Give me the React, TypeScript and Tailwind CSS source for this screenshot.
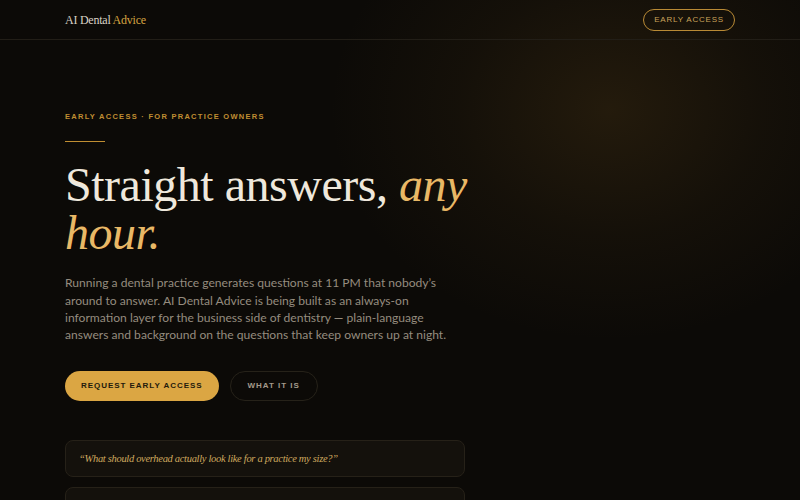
import React from "react";

const serif = "font-['Liberation_Serif','DejaVu_Serif',serif]";
const sans = "font-['Liberation_Sans','Arial',sans-serif]";
const body = "font-['Lato','Noto_Sans',sans-serif]";

const questions = [
  "\u201cWhat should overhead actually look like for a practice my size?\u201d",
  "\u201cIs it time to bring on an associate, or should I wait another year?\u201d",
];

export default function App() {
  return (
    <div className="relative min-h-[500px] w-full overflow-hidden bg-[#0c0a07] text-[#efe8dc]">
      <div className="pointer-events-none absolute left-[330px] top-[-120px] h-[460px] w-[560px] rounded-full bg-[radial-gradient(closest-side,rgba(120,86,30,0.22),rgba(120,86,30,0.08)_55%,transparent)]" />

      <header className="relative flex h-10 items-center justify-between border-b border-[#221e17] px-[65px]">
        <div className={`${serif} text-[12px] tracking-[-0.02em] text-[#d9d2c5]`}>
          AI Dental <span className="text-[#d7a441]">Advice</span>
        </div>
        <button
          className={`${sans} h-[22px] rounded-full border border-[#b98a35] px-[10px] text-[8px] tracking-[0.1em] text-[#c9a25a]`}
        >
          EARLY ACCESS
        </button>
      </header>

      <main className="relative px-[65px] pt-[71px]">
        <p className={`${sans} text-[7.5px] font-bold tracking-[0.17em] text-[#c08e32]`}>
          EARLY ACCESS · FOR PRACTICE OWNERS
        </p>
        <div className="mt-[19px] h-px w-10 bg-[#c08e32]" />

        <h1 className={`${serif} mt-[19px] text-[48px] leading-[48px] tracking-[-0.01em] text-[#efe8dc]`}>
          Straight answers, <em className="text-[#e9b866]">any</em>
          <br />
          <em className="text-[#e9b866]">hour.</em>
        </h1>

        <p className={`${body} mt-[17px] text-[12.1px] leading-[17.4px] text-[#958c7f]`}>
          Running a dental practice generates questions at 11 PM that nobody’s
          <br />
          around to answer. AI Dental Advice is being built as an always-on
          <br />
          information layer for the business side of dentistry — plain-language
          <br />
          answers and background on the questions that keep owners up at night.
        </p>

        <div className="mt-[27px] flex gap-[11px]">
          <button
            className={`${sans} h-[30px] rounded-full bg-[#dba643] px-[16px] text-[8px] font-bold tracking-[0.12em] text-[#231a0c]`}
          >
            REQUEST EARLY ACCESS
          </button>
          <button
            className={`${sans} h-[30px] rounded-full border border-[#262219] px-[17px] text-[8px] font-bold tracking-[0.12em] text-[#a39a8b]`}
          >
            WHAT IT IS
          </button>
        </div>

        <div className="mt-[39px] flex w-[400px] flex-col gap-[10px]">
          {questions.map((q) => (
            <div
              key={q}
              className="flex h-[37px] items-center rounded-lg border border-[#262118] bg-[#14110c] px-[13px]"
            >
              <span className={`${serif} text-[10.5px] italic tracking-[-0.03em] text-[#cfa95f]`}>{q}</span>
            </div>
          ))}
        </div>
      </main>
    </div>
  );
}
